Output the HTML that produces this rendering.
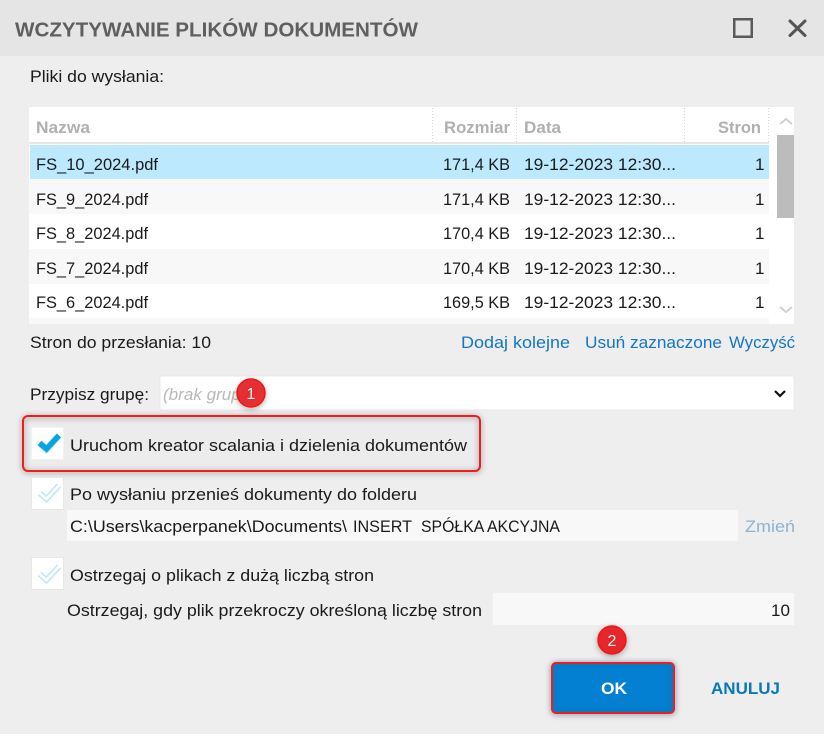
<!DOCTYPE html>
<html lang="pl"><head><meta charset="utf-8"><title>Wczytywanie</title>
<style>
html,body{margin:0;padding:0;background:#eee;width:824px;height:734px;overflow:hidden}
svg{display:block}
text{font-family:"Liberation Sans",sans-serif;font-size:17px;fill:#1a1a1a;white-space:pre}
.h{fill:#b0b0b0;font-weight:bold;font-size:17px}
.l{fill:#1577c0}
.t{fill:#5f5f5f;font-weight:bold;font-size:20.5px}
</style></head><body>
<svg width="824" height="734" viewBox="0 0 824 734" xmlns="http://www.w3.org/2000/svg">
<defs>
<filter id="b" x="-10%" y="-30%" width="120%" height="160%"><feGaussianBlur stdDeviation="3"/></filter>
<filter id="s2" x="-40%" y="-40%" width="180%" height="180%"><feDropShadow dx="0" dy="2" stdDeviation="3" flood-color="#000" flood-opacity=".3"/></filter>
</defs>
<rect width="824" height="734" fill="#eeeeee"/>
<rect width="824" height="56" fill="#e5e5e5"/>
<text class="t" x="15" y="36.500" textLength="403" lengthAdjust="spacingAndGlyphs">WCZYTYWANIE PLIKÓW DOKUMENTÓW</text>
<rect x="734.250" y="19.250" width="17.500" height="17.500" fill="none" stroke="#5a5a5a" stroke-width="2.500"/>
<path d="M790 21L805 35.500M805 21L790 35.500" stroke="#555" stroke-width="3" stroke-linecap="round" fill="none"/>
<text x="30" y="82" textLength="134" lengthAdjust="spacingAndGlyphs">Pliki do wysłania:</text>

<rect x="29" y="107" width="765" height="217" fill="#fff"/>
<rect x="29" y="142" width="740" height="2" fill="#e6e6e6"/>
<path d="M432.500 108V144M516.500 108V144M684.500 108V144M768.500 108V144" stroke="#d8d8d8" stroke-dasharray="1 2"/>
<text class="h" x="36" y="133" textLength="54" lengthAdjust="spacingAndGlyphs">Nazwa</text>
<text class="h" x="444" y="133" textLength="66" lengthAdjust="spacingAndGlyphs">Rozmiar</text>
<text class="h" x="524" y="133" textLength="37" lengthAdjust="spacingAndGlyphs">Data</text>
<text class="h" x="718" y="133" textLength="43" lengthAdjust="spacingAndGlyphs">Stron</text>

<rect x="30" y="145" width="739" height="34" fill="#bce9fd"/>
<rect x="29" y="179" width="740" height="35" fill="#f8f8f8"/>
<rect x="29" y="249" width="740" height="35" fill="#f8f8f8"/>
<rect x="29" y="318" width="740" height="6" fill="#f8f8f8"/>

<text x="36" y="170" textLength="122" lengthAdjust="spacingAndGlyphs">FS_10_2024.pdf</text>
<text x="443" y="170" textLength="67" lengthAdjust="spacingAndGlyphs">171,4 KB</text>
<text x="524" y="170" textLength="152" lengthAdjust="spacingAndGlyphs">19-12-2023 12:30...</text>
<text x="755" y="170">1</text>
<text x="36" y="205" textLength="112" lengthAdjust="spacingAndGlyphs">FS_9_2024.pdf</text>
<text x="443" y="205" textLength="67" lengthAdjust="spacingAndGlyphs">171,4 KB</text>
<text x="524" y="205" textLength="152" lengthAdjust="spacingAndGlyphs">19-12-2023 12:30...</text>
<text x="755" y="205">1</text>
<text x="36" y="239" textLength="112" lengthAdjust="spacingAndGlyphs">FS_8_2024.pdf</text>
<text x="443" y="239" textLength="67" lengthAdjust="spacingAndGlyphs">170,4 KB</text>
<text x="524" y="239" textLength="152" lengthAdjust="spacingAndGlyphs">19-12-2023 12:30...</text>
<text x="755" y="239">1</text>
<text x="36" y="274" textLength="112" lengthAdjust="spacingAndGlyphs">FS_7_2024.pdf</text>
<text x="443" y="274" textLength="67" lengthAdjust="spacingAndGlyphs">170,4 KB</text>
<text x="524" y="274" textLength="152" lengthAdjust="spacingAndGlyphs">19-12-2023 12:30...</text>
<text x="755" y="274">1</text>
<text x="36" y="308" textLength="112" lengthAdjust="spacingAndGlyphs">FS_6_2024.pdf</text>
<text x="443" y="308" textLength="67" lengthAdjust="spacingAndGlyphs">169,5 KB</text>
<text x="524" y="308" textLength="152" lengthAdjust="spacingAndGlyphs">19-12-2023 12:30...</text>
<text x="755" y="308">1</text>

<rect x="777" y="135" width="17" height="83" fill="#bcbcbc"/>
<path d="M780 124L786 119L792 124" fill="none" stroke="#d0d0d0" stroke-width="2"/>
<path d="M780 307L786 312L792 307" fill="none" stroke="#d0d0d0" stroke-width="2"/>

<text x="30" y="348" textLength="181" lengthAdjust="spacingAndGlyphs">Stron do przesłania: 10</text>
<text class="l" x="461" y="348" textLength="109" lengthAdjust="spacingAndGlyphs">Dodaj kolejne</text>
<text class="l" x="585" y="348" textLength="137" lengthAdjust="spacingAndGlyphs">Usuń zaznaczone</text>
<text class="l" x="729" y="348" textLength="66" lengthAdjust="spacingAndGlyphs">Wyczyść</text>

<text x="30" y="400" textLength="119" lengthAdjust="spacingAndGlyphs">Przypisz grupę:</text>
<rect x="160" y="376" width="634" height="34" fill="#fff" stroke="#e8e8e8"/>
<text x="163" y="400" textLength="92" lengthAdjust="spacingAndGlyphs" style="fill:#b8b8b8;font-style:italic">(brak grupy)</text>
<path d="M775 391L780 396L785 391" fill="none" stroke="#111" stroke-width="2.200"/>
<circle cx="251" cy="393" r="14" fill="#e5282c" fill-opacity=".95" stroke="#f01818" stroke-width="1.500" filter="url(#s2)"/>
<text x="251" y="399" text-anchor="middle" style="fill:#f4f4f4;font-size:16px">1</text>

<rect x="23" y="416" width="457" height="55" rx="5" fill="#ececec"/>
<rect x="23" y="417" width="457" height="55" rx="5" fill="none" stroke="#000" stroke-opacity=".32" stroke-width="3" filter="url(#b)"/>
<rect x="23" y="416" width="457" height="55" rx="5" fill="none" stroke="#f21c1c" stroke-width="2"/>
<rect x="31.500" y="427.500" width="32" height="32" fill="#fff" stroke="#f2f2f2"/>
<path d="M39.500 443L46.500 449L59 435.500" fill="none" stroke="#bce9fb" stroke-width="7"/>
<path d="M39.500 443L46.500 449L59 435.500" fill="none" stroke="#0aa3e2" stroke-width="5.500"/>
<text x="70" y="451" textLength="397" lengthAdjust="spacingAndGlyphs">Uruchom kreator scalania i dzielenia dokumentów</text>

<rect x="31.500" y="477.500" width="32" height="32" fill="#fff" stroke="#e8e8e8"/>
<path d="M39.500 493L46.500 499L59 485.500" fill="none" stroke="#c2e8f8" stroke-width="6"/>
<path d="M39.500 493L46.500 499L59 485.500" fill="none" stroke="#fff" stroke-width="2.600"/>
<text x="70" y="500" textLength="347" lengthAdjust="spacingAndGlyphs">Po wysłaniu przenieś dokumenty do folderu</text>
<rect x="67" y="510" width="671" height="31" fill="#f8f8f8"/>
<text x="70" y="532" textLength="277" lengthAdjust="spacingAndGlyphs">C:\Users\kacperpanek\Documents\</text>
<text x="353" y="532" textLength="59" lengthAdjust="spacingAndGlyphs">INSERT</text>
<text x="421" y="532" textLength="139" lengthAdjust="spacingAndGlyphs">SPÓŁKA AKCYJNA</text>
<text x="745" y="532" textLength="50" lengthAdjust="spacingAndGlyphs" style="fill:#8cb3d4">Zmień</text>

<rect x="31.500" y="557.500" width="32" height="32" fill="#fff" stroke="#e8e8e8"/>
<path d="M39.500 574L46.500 580L59 566.500" fill="none" stroke="#c2e8f8" stroke-width="6"/>
<path d="M39.500 574L46.500 580L59 566.500" fill="none" stroke="#fff" stroke-width="2.600"/>
<text x="70" y="581" textLength="304" lengthAdjust="spacingAndGlyphs">Ostrzegaj o plikach z dużą liczbą stron</text>
<text x="67" y="616" textLength="415" lengthAdjust="spacingAndGlyphs">Ostrzegaj, gdy plik przekroczy określoną liczbę stron</text>
<rect x="493" y="593" width="301" height="32" fill="#f8f8f8"/>
<text x="771" y="616" textLength="19" lengthAdjust="spacingAndGlyphs">10</text>

<circle cx="612" cy="640" r="14" fill="#e5282c" stroke="#f01818" stroke-width="1.500" filter="url(#s2)"/>
<text x="612" y="646" text-anchor="middle" style="fill:#f4f4f4;font-size:16px">2</text>
<rect x="552" y="664" width="122" height="50" rx="4" fill="none" stroke="#000" stroke-opacity=".32" stroke-width="3" filter="url(#b)"/>
<rect x="552" y="663" width="122" height="50" rx="4" fill="#0480d3"/>
<rect x="554" y="665" width="118" height="46" rx="3" fill="none" stroke="#0a6cad" stroke-opacity=".55" stroke-width="3" filter="url(#b)"/>
<rect x="552" y="663" width="122" height="50" rx="4" fill="none" stroke="#f21c1c" stroke-width="2"/>
<text x="614" y="694" text-anchor="middle" textLength="26" lengthAdjust="spacingAndGlyphs" style="fill:#fff;font-weight:bold">OK</text>
<text x="711" y="694" textLength="69" lengthAdjust="spacingAndGlyphs" style="fill:#0a78b8;font-weight:bold">ANULUJ</text>
</svg>
</body></html>
